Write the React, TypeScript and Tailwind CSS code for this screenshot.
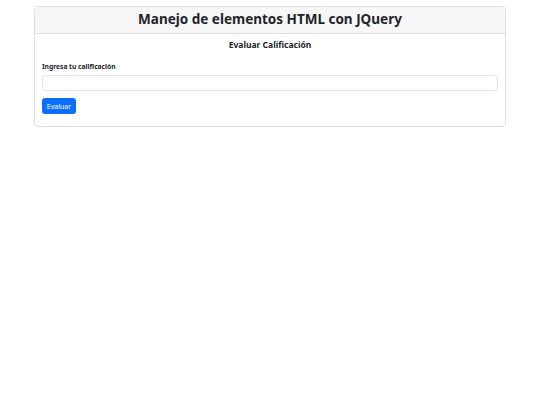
export default function App() {
  return (
    <div className="min-h-[405px] bg-white pt-[6px] text-[#212529]" style={{ fontFamily: '"Noto Sans", sans-serif' }}>
      <div className="mx-[34px] rounded-[4px] border border-[#dfdfdf]">
        <div className="flex h-[27px] items-center justify-center border-b border-[#dfdfdf] bg-[#f7f7f7] rounded-t-[4px]">
          <h1 className="text-[13.5px] font-bold leading-none">Manejo de elementos HTML con JQuery</h1>
        </div>
        <div className="px-[7px] pt-[5px] pb-[12px]">
          <h2 className="text-center text-[8.5px] font-bold leading-[12px]">Evaluar Calificación</h2>
          <label className="mt-[11px] block text-[6.7px] font-bold leading-[10px]">Ingresa tu calificación</label>
          <input
            type="text"
            className="mt-[3px] block h-[16px] w-full rounded-[4px] border border-[#e3e3e3] bg-white outline-none"
          />
          <button className="mt-[7px] flex h-[16px] w-[34px] items-center justify-center rounded-[3px] bg-[#0d6efd] text-[7px] leading-none text-white">
            Evaluar
          </button>
        </div>
      </div>
    </div>
  );
}
